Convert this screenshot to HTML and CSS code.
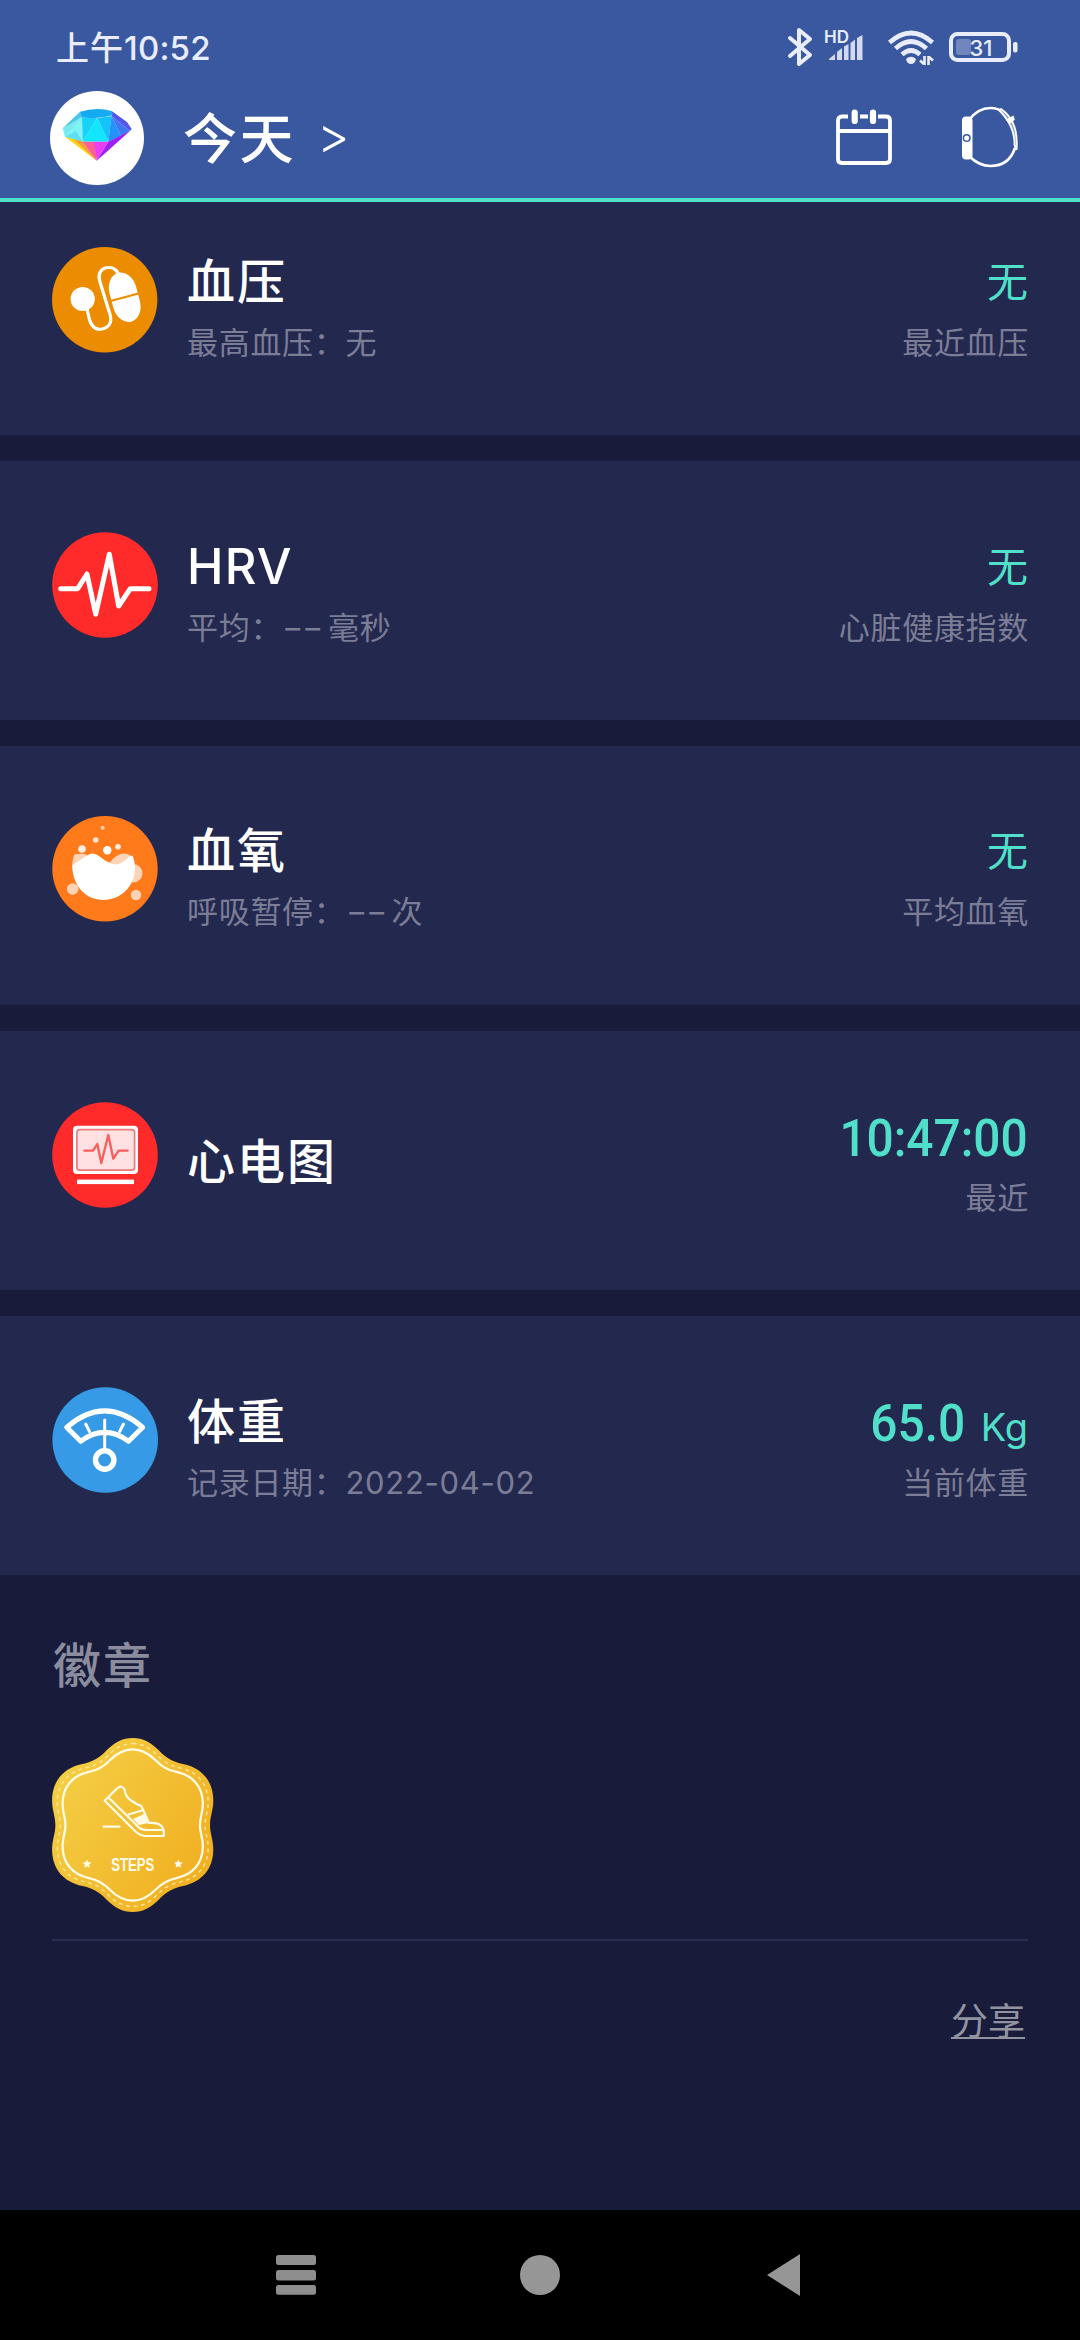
FILE: index.html
```html
<!DOCTYPE html>
<html lang="zh-CN">
<head>
<meta charset="utf-8">
<title>今天</title>
<link rel="stylesheet" href="styles.css">
</head>
<body>
<div class="screen">
  <header class="header">
    <div class="status">
      <span class="clock">上午<span class="clock-digits">10:52</span></span>
      <div class="status-icons">
        <svg class="bluetooth" width="26" height="40" viewBox="0 0 26 40"><path d="M3 11 L23 28 L12 37 V3 L23 12 L3 29" fill="none" stroke="#e9edfb" stroke-width="4" stroke-linejoin="round" stroke-linecap="round"/></svg>
        <svg class="signal" width="40" height="40" viewBox="0 0 40 40">
          <text class="hd" x="0" y="16">HD</text>
          <g fill="#d3daf0"><path d="M5 32 L11 27 V33 H5Z"/><path d="M13 25 L18 21 V33 H13Z"/><path d="M20 19.500 L24.500 17 V33 H20Z"/><path d="M26.500 16 L31 12.500 V33 H26.500Z"/><path d="M33 11 L38.500 8 V33 H33Z"/></g>
        </svg>
        <svg class="wifi" width="48" height="40" viewBox="0 0 48 40">
          <g fill="none" stroke="#e9edfb" stroke-width="4.600"><path d="M2.500 15.500 Q24 -3.500 45.500 15.500"/><path d="M8.500 21.500 Q24 7.500 39.500 21.500"/><path d="M15 27.500 Q24 19.500 33 27.500"/></g>
          <path d="M19 32 Q24 27.500 29 32 Q28 37 24 37 Q20 37 19 32Z" fill="#e9edfb"/>
          <path d="M37.500 29 V38 M37 37 L33 33.500 M41.500 38 V29 M42 30 L46 33.500" fill="none" stroke="#e9edfb" stroke-width="2.600"/>
        </svg>
        <svg class="battery" width="70" height="40" viewBox="0 0 70 40">
          <rect x="2" y="7" width="58" height="26" rx="6.500" fill="none" stroke="#e9edfb" stroke-width="4"/>
          <rect x="7" y="12" width="15" height="16" rx="3" fill="#7186bd"/>
          <rect x="64" y="15" width="4.500" height="10.500" rx="2" fill="#e9edfb"/>
          <text class="charge" x="20.500" y="28.500">31</text>
        </svg>
      </div>
    </div>
    <div class="titlebar">
      <svg class="avatar" width="94" height="94" viewBox="0 0 94 94">
        <circle cx="47" cy="47" r="47" fill="#fff"/>
        <path d="M12.700 37.300 L30 20.700 L32 26 L21 33Z" fill="#4cc6e8"/>
        <path d="M12.700 37.300 L32 26 L27 40 L15 45.700Z" fill="#77e9ef"/>
        <path d="M15 45.700 L32 26 L32.700 50.700Z" fill="#7ff3f4"/>
        <path d="M15 45.700 L26 40 L32.700 50.700Z" fill="#5fe0f2"/>
        <path d="M32 26 L47.300 27.300 L32.700 50.700Z" fill="#16d3fa"/>
        <path d="M47.300 27.300 L58.300 50.700 H32.700Z" fill="#12e6fd"/>
        <path d="M47.300 27.300 L61.500 25 L58.300 50.700Z" fill="#12c4fb"/>
        <path d="M61.500 25 L71 45 L58.300 50.700Z" fill="#2492fb"/>
        <path d="M61.500 25 L80 40 L71 45Z" fill="#3d77f5"/>
        <path d="M61.700 20 L77 31 L81.700 38 L80 40 L61.500 25Z" fill="#5557e8"/>
        <path d="M30 20.700 Q47 15.500 61.700 20 L63 24 Q47 29 31.700 26Z" fill="#16aaf0"/>
        <path d="M15 45.700 L32.700 50.700 L46.700 69.700Z" fill="#fcd315"/>
        <path d="M24 48.200 L32.700 50.700 L46.700 69.700Z" fill="#fb9a3c"/>
        <path d="M32.700 50.700 H45 L46.700 69.700Z" fill="#fb5d97"/>
        <path d="M44 50.700 H58.300 L46.700 69.700Z" fill="#e93ff0"/>
        <path d="M58.300 50.700 L80 40 L46.700 69.700Z" fill="#9d1ff5"/>
      </svg>
      <span class="day">今天</span>
      <span class="arrow">&gt;</span>
      <svg class="calendar" width="56" height="58" viewBox="0 0 56 58">
        <path d="M2 22 H54 M12 7.500 H6 Q2 7.500 2 11.500 V50 Q2 54 6 54 H50 Q54 54 54 50 V11.500 Q54 7.500 50 7.500 H42 M24 7.500 H32" fill="none" stroke="#fff" stroke-width="3.800"/>
        <path d="M18.700 3.500 V12 M37 3.500 V12" stroke="#fff" stroke-width="6.200" stroke-linecap="round"/>
      </svg>
      <svg class="watch" width="58" height="64" viewBox="0 0 58 64">
        <path d="M7 14 Q16 2 28.500 2 Q36 2 42 6.500 M7 50 Q17 60 28.500 60 Q47 60 53 42" fill="none" stroke="#fff" stroke-width="2.600"/>
        <rect x="0" y="10.500" width="10.500" height="43" rx="4" fill="#fff"/>
        <circle cx="4.700" cy="32" r="3.300" fill="none" stroke="#3a58a0" stroke-width="1.500"/>
        <path d="M39 3 Q57 15 54.500 44 L52.500 39 Q53 20 37 4Z" fill="#8fa1cc" stroke="#fff" stroke-width="1.800"/>
        <path d="M45 14 L51 10.500 L52 13.500 L47.500 17Z" fill="#fff" stroke="#fff" stroke-width="1.500"/>
      </svg>
    </div>
  </header>

  <main class="cards">
    <section class="card card-first">
      <svg class="icon" viewBox="0 0 106 106">
        <circle cx="52.700" cy="52.700" r="52.700" fill="#ec8c00"/>
        <circle cx="30.700" cy="52" r="12.100" fill="#fff"/>
        <path d="M35 62 L37.500 72.500 C39.500 80 44.500 83.500 50 82 C57 80.500 60 76 58.300 68.500 L47.700 34 C45.500 27 49 22 54 20.800 C60 19.500 64.500 22.500 66.500 27" fill="none" stroke="#fff" stroke-width="3.200"/>
        <g transform="rotate(-15 72.700 50.200)"><rect x="59" y="25" width="27.400" height="50.500" rx="13.700" ry="18" fill="#fff"/><path d="M58 50.200 H87" stroke="#ec8c00" stroke-width="2.200"/></g>
      </svg>
      <div class="info"><h2 class="name">血压</h2><p class="note">最高血压：无</p></div>
      <div class="result"><p class="value">无</p><p class="note">最近血压</p></div>
    </section>

    <section class="card">
      <svg class="icon" viewBox="0 0 106 106">
        <circle cx="53" cy="53" r="52.800" fill="#ff2a2a"/>
        <path d="M8.700 56.700 H25.700 L35 42 L43.700 82.300 L57.300 22.300 L66.700 74 L78.300 56.700 H97" fill="none" stroke="#fff" stroke-width="5" stroke-linejoin="round" stroke-linecap="round"/>
      </svg>
      <div class="info"><h2 class="name latin">HRV</h2><p class="note">平均：<span class="dashes">--</span>毫秒</p></div>
      <div class="result"><p class="value">无</p><p class="note">心脏健康指数</p></div>
    </section>

    <section class="card card-oxygen">
      <svg class="icon" viewBox="0 0 106 106">
        <circle cx="53" cy="52.700" r="52.700" fill="#ff7a1a"/>
        <g fill="#ffd3b5"><circle cx="20.700" cy="73" r="5.800"/><circle cx="81.300" cy="57.300" r="9.200"/><circle cx="84" cy="79" r="5.200"/><circle cx="50.700" cy="11.700" r="2"/>
        <path d="M20.300 52 Q20 43 22.500 38.500 Q32 36 39 41 L58 46.500 Q68 33 79.500 40 L83 52Z"/></g>
        <g fill="#fff"><path d="M20.300 49.500 Q31 42 36 39 Q41 35.500 47 40 Q57 48 63 48.500 Q70 48 75 42.500 Q79 38.500 81 40.500 Q83 46 83 52 C83 70 69 84 51.500 84 C34 84 20.300 70 20.300 49.500Z"/><circle cx="55.300" cy="34.300" r="4.200"/><circle cx="30" cy="33" r="3.800" fill="#ffeee2"/><circle cx="43.700" cy="24" r="2.800" fill="#ffe2cf"/><circle cx="66" cy="30.700" r="2.800" fill="#ffeee2"/></g>
      </svg>
      <div class="info"><h2 class="name">血氧</h2><p class="note">呼吸暂停：<span class="dashes">--</span>次</p></div>
      <div class="result"><p class="value">无</p><p class="note">平均血氧</p></div>
    </section>

    <section class="card">
      <svg class="icon" viewBox="0 0 106 106">
        <circle cx="53" cy="53" r="52.800" fill="#ff2a2a"/>
        <rect x="21" y="23.700" width="65" height="48.200" rx="4" fill="#fff"/>
        <rect x="24.900" y="27.600" width="57.700" height="40.600" rx="3" fill="#ffe1e1" stroke="#ea7c7c" stroke-width="1.700"/>
        <path d="M32.300 48.700 H41 L45.300 42 L49.300 61 L56.300 33 L61.300 56.700 L66.700 48.700 H75.700" fill="none" stroke="#f95d5d" stroke-width="2.300" stroke-linejoin="round" stroke-linecap="round"/>
        <rect x="25" y="77.600" width="57" height="4.500" fill="#fff"/>
      </svg>
      <div class="info info-single"><h2 class="name">心电图</h2></div>
      <div class="result"><p class="value"><span class="number">10:47:00</span></p><p class="note">最近</p></div>
    </section>

    <section class="card">
      <svg class="icon" viewBox="0 0 106 106">
        <circle cx="53.200" cy="53" r="52.800" fill="#369ae6"/>
        <g fill="none" stroke="#fff" stroke-linecap="round" stroke-linejoin="round">
          <path d="M14.700 40.300 Q52.700 7.500 90.700 40.300 L76.500 54.300 Q52.700 36.500 28.700 54.300 Z" stroke-width="5"/>
          <path d="M33.700 37 L37.500 44.500 M52.700 33 V63 M71.500 37 L67.700 44.500" stroke-width="3"/>
          <circle cx="52.700" cy="73" r="9.200" stroke-width="5.400"/>
        </g>
      </svg>
      <div class="info"><h2 class="name">体重</h2><p class="note">记录日期：2022-04-02</p></div>
      <div class="result"><p class="value"><span class="number">65.0</span><span class="unit">Kg</span></p><p class="note">当前体重</p></div>
    </section>
  </main>

  <section class="badges">
    <h2 class="badges-title">徽章</h2>
    <svg class="badge" width="162" height="174" viewBox="0 0 162 174">
      <defs>
        <linearGradient id="gold" x1="0" y1="0.200" x2="1" y2="0.900"><stop offset="0" stop-color="#f4cf45"/><stop offset="1" stop-color="#f1ac1e"/></linearGradient>
        <path id="seal" d="M80.700 0 C91 0 99 4.500 107 12.500 C114 20 121 24 131 26 C150 30 161 43 161.300 62 C161.500 72 158 78 158 87 C158 96 161.500 102 161.300 112 C161 131 150 144 131 148 C121 150 114 154 107 161.500 C99 169.500 91 174 80.700 174 C70.400 174 62.400 169.500 54.400 161.500 C47.400 154 40.400 150 30.400 148 C11.400 144 .4 131 .1 112 C-.1 102 3.400 96 3.400 87 C3.400 78 -.1 72 .1 62 C.4 43 11.400 30 30.400 26 C40.400 24 47.400 20 54.400 12.500 C62.400 4.500 70.400 0 80.700 0Z"/>
      </defs>
      <use href="#seal" fill="url(#gold)"/>
      <use href="#seal" transform="translate(80.700 87) scale(.936) translate(-80.700 -87)" fill="none" stroke="#fbe7a0" stroke-width="1.500" stroke-dasharray="4 4"/>
      <use href="#seal" transform="translate(80.700 87) scale(.87) translate(-80.700 -87)" fill="none" stroke="#fffbe6" stroke-width="2.600"/>
      <g fill="none" stroke="#fffbe8" stroke-width="2.200" stroke-linejoin="round" stroke-linecap="round">
        <path d="M52.700 62.700 L65 50.500 Q70 46.500 72.500 51.500 Q73.500 59 79 62.500 Q84 66 89.300 68 L97 85 Q108 84.500 110.500 89.500 Q112.500 92.500 111.700 98 H93 Q88 97.500 84 94 Z"/>
        <path d="M57.500 60.500 L84 86.500 Q88 92 94 92 H111"/>
        <path d="M76.500 76.500 L90 72.500 M51.500 88.700 H67.500"/>
      </g>
      <path d="M81 81 L92 76 L96.500 85 L87 87Z" fill="#fffbe8"/>
      <g fill="#fffbe8"><path id="star" d="M35 121.500 L36.300 124.300 L39.300 124.600 L37.100 126.700 L37.700 129.700 L35 128.200 L32.300 129.700 L32.900 126.700 L30.700 124.600 L33.700 124.300Z"/><use href="#star" x="91.300"/></g>
      <text class="badge-label" x="80.700" y="133" text-anchor="middle" textLength="43" lengthAdjust="spacingAndGlyphs">STEPS</text>
    </svg>
    <div class="share-row"><a class="share">分享</a></div>
  </section>

  <nav class="nav">
    <svg width="40" height="40" viewBox="0 0 40 40" fill="#8e8e8e"><rect y="0" width="40" height="10" rx="2.500"/><rect y="15" width="40" height="10.500" rx="2.500"/><rect y="30" width="40" height="9.800" rx="2.500"/></svg>
    <svg class="home" width="40" height="40" viewBox="0 0 40 40"><circle cx="20" cy="20" r="20" fill="#969696"/></svg>
    <svg class="back" width="33" height="42" viewBox="0 0 33 42"><path d="M0 21 L33 0 V42Z" fill="#969696"/></svg>
  </nav>
</div>
</body>
</html>
```
FILE: styles.css
```css
* { box-sizing: border-box; }

body {
  margin: 0;
  background: #181b3a;
  font-family: Inter, "Noto Sans CJK SC", sans-serif;
  color: #fff;
}

h2, p { margin: 0; }

svg { display: block; flex: none; }

.screen {
  width: 1080px;
  height: 2340px;
  display: flex;
  flex-direction: column;
  overflow: hidden;
}

/* header */
.header {
  height: 202px;
  flex: none;
  background: #3a58a0;
  border-bottom: 4px solid #50dfc8;
}

.status {
  height: 91px;
  padding: 27px 61px 0 56px;
  display: flex;
  justify-content: space-between;
}

.clock {
  display: flex;
  font-size: 33px;
  font-weight: 500;
  line-height: 42px;
  letter-spacing: 1px;
  color: #e9edfb;
}

.clock-digits { letter-spacing: 0.2px; }

.status-icons { display: flex; }
.signal { margin-left: 11px; }
.wifi { margin-left: 23px; }
.battery { margin-left: 14px; }
.hd { font: 600 17px Inter, sans-serif; fill: #e9edfb; }
.charge { font: 500 22px Inter, sans-serif; fill: #e9edfb; }

.titlebar {
  height: 94px;
  padding: 0 60px 0 50px;
  display: flex;
  align-items: center;
}

.day {
  margin-left: 39px;
  padding-top: 3px;
  font-size: 54px;
  font-weight: 500;
  line-height: 91px;
  letter-spacing: 2.500px;
}

.arrow {
  margin-left: 21px;
  font-size: 50px;
  font-weight: 300;
  line-height: 90px;
  padding-bottom: 6px;
}

.calendar { margin-left: auto; }
.watch { margin-left: 70px; }

/* metric cards */
.cards {
  display: flex;
  flex-direction: column;
  gap: 26px;
}

.card {
  height: 259px;
  padding: 71px 52px 0;
  display: flex;
  align-items: flex-start;
  background: #23284e;
}

.card-first { height: 233px; padding-top: 45px; }
.card-oxygen { padding-top: 70px; }

.icon { width: 106px; height: 106px; }

.info { margin: 5px 0 0 29px; }
.info-single { margin-top: 30px; }

.name {
  font-size: 48px;
  font-weight: 500;
  line-height: 60px;
  letter-spacing: 2px;
}

.latin { font-size: 49px; letter-spacing: 1.200px; }

.note {
  margin-top: 11px;
  font-size: 31px;
  line-height: 40px;
  letter-spacing: 0.700px;
  color: #7b7d96;
}

/* wide dashes standing in for a missing reading */
.dashes {
  display: inline-block;
  width: 46px;
  line-height: 1;
  letter-spacing: -1px;
  white-space: nowrap;
  transform: scaleX(1.500);
  transform-origin: 0 50%;
}

.result {
  margin: 4px 0 0 auto;
  display: flex;
  flex-direction: column;
  align-items: flex-end;
}

.result .note { margin-right: -1px; }

.value {
  height: 62px;
  display: flex;
  align-items: baseline;
  font-size: 41px;
  line-height: 62px;
  color: #50dfc8;
}

.value + .note { margin-top: 10px; }

.number {
  padding-top: 2px;
  font-family: Roboto, sans-serif;
  font-size: 52px;
  font-weight: 500;
  transform: scaleX(0.920);
  transform-origin: 100% 50%;
}

.unit { margin-left: 16px; font-size: 38px; }

/* badges */
.badges {
  flex: 1;
  padding: 60px 52px 0;
}

.badges-title {
  padding-left: 1px;
  font-size: 48px;
  font-weight: 500;
  line-height: 62px;
  letter-spacing: 2px;
  color: #8b8d9f;
}

.badge { margin-top: 41px; }
.badge-label { font: 700 17.500px "Liberation Sans Narrow", "Liberation Sans", sans-serif; fill: #fffbe8; }

.share-row {
  margin-top: 27px;
  padding: 58px 3px 0 0;
  display: flex;
  justify-content: flex-end;
  border-top: 2px solid #2b2e50;
}

.share {
  font-size: 37px;
  line-height: 46px;
  color: #9293a0;
  border-bottom: 2px solid #9293a0;
  height: 40px;
}

/* system navigation */
.nav {
  height: 130px;
  flex: none;
  padding-left: 276px;
  display: flex;
  align-items: center;
  background: #000;
}

.home { margin-left: 204px; }
.back { margin-left: 207px; }
```
